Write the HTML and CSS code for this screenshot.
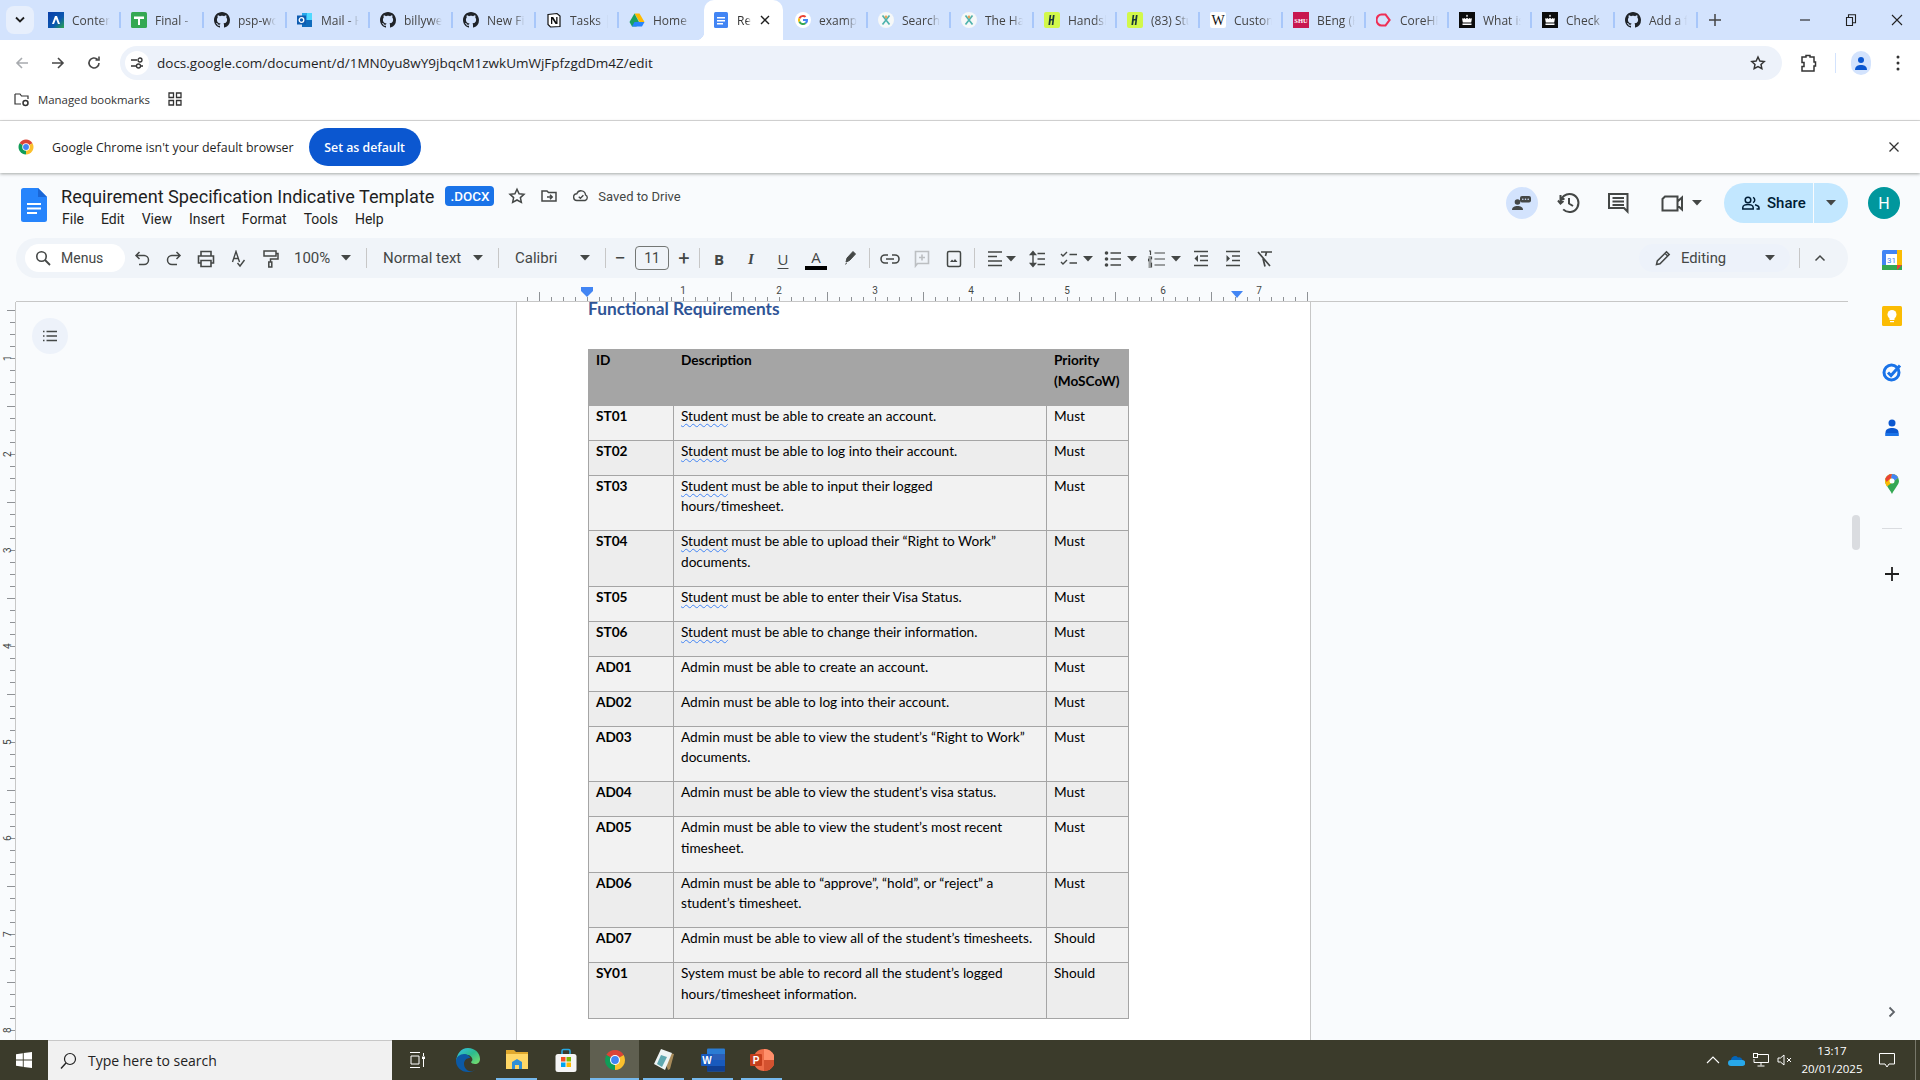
FILE: index.html
```html
<!DOCTYPE html>
<html lang="en">
<head>
    <meta charset="UTF-8">
    <title>Requirement Specification Indicative Template</title>
    <link rel="stylesheet" href="styles.css">
</head>
<body>
    <!-- shared icons -->
    <svg class="defs" width="0" height="0">
        <symbol id="github" viewBox="0 0 16 16"><path fill="#1f2328" d="M8 0C3.58 0 0 3.58 0 8c0 3.54 2.29 6.53 5.47 7.59.4.07.55-.17.55-.38 0-.19-.01-.82-.01-1.49-2.01.37-2.53-.49-2.69-.94-.09-.23-.48-.94-.82-1.13-.28-.15-.68-.52-.01-.53.63-.01 1.08.58 1.23.82.72 1.21 1.87.87 2.33.66.07-.52.28-.87.51-1.07-1.78-.2-3.64-.89-3.64-3.95 0-.87.31-1.59.82-2.15-.08-.2-.36-1.02.08-2.12 0 0 .67-.21 2.2.82.64-.18 1.32-.27 2-.27.68 0 1.36.09 2 .27 1.53-1.04 2.2-.82 2.2-.82.44 1.1.16 1.92.08 2.12.51.56.82 1.27.82 2.15 0 3.07-1.87 3.75-3.65 3.95.29.25.54.73.54 1.48 0 1.07-.01 1.93-.01 2.2 0 .21.15.46.55.38A8.013 8.013 0 0016 8c0-4.42-3.58-8-8-8z"/></symbol>
        <symbol id="handshake" viewBox="0 0 16 16"><rect width="16" height="16" rx="2" fill="#d2f84a"/><path fill="#17363a" d="M5.6 3h1.7l-.6 4h1.6l.6-4h1.7L9.400 13H7.700l.7-4.600H6.800L6.100 13H4.400z"/></symbol>
        <symbol id="crown" viewBox="0 0 16 16"><rect width="16" height="16" fill="#0b0c0c"/><path fill="#fff" d="M8 2.500l1 1.500-1 1-1-1zM3 6l1 .8L5.500 6l.8 1L8 5.800 9.700 7l.8-1 1.500.8L13 6l-.8 4.500H3.800zM3.500 11.500h9v1.500h-9z"/></symbol>
        <symbol id="chrome" viewBox="0 0 24 24"><path fill="#db4437" d="M12 12L3.340 7A10 10 0 0 1 20.660 7z"/><path fill="#fbc02d" d="M12 12l8.660-5A10 10 0 0 1 12 22z"/><path fill="#0f9d58" d="M12 12v10A10 10 0 0 1 3.340 7z"/><circle cx="12" cy="12" r="5" fill="#fff"/><circle cx="12" cy="12" r="3.900" fill="#4285f4"/></symbol>
        <symbol id="caret" viewBox="0 0 10 6"><path fill="#444746" d="M0 0h10L5 5.500z"/></symbol>
        <symbol id="docs" viewBox="0 0 26 34"><path fill="#2684fc" d="M2.500 0H17l9 9v22.500a2.500 2.500 0 0 1-2.500 2.500h-21A2.500 2.500 0 0 1 0 31.500v-29A2.500 2.500 0 0 1 2.500 0z"/><path fill="#1a66d6" d="M17 0l9 9h-9z"/><path fill="#fff" d="M6 15h14v2H6zM6 19.500h14v2H6zM6 24h10v2H6z"/></symbol>
        <symbol id="teal" viewBox="0 0 16 16"><circle cx="8" cy="8" r="8" fill="#f6f8f8"/><path d="M4.500 3.500l7 9M11.500 3.500l-7 9" stroke="#4fb3ad" stroke-width="1.700"/><circle cx="8" cy="5" r="1.400" fill="#e6a65c"/></symbol>
    </svg>

    <div class="tabstrip">
        <div class="tab-search"><svg width="12" height="8" viewBox="0 0 12 8"><path d="M2 1.500l4 4 4-4" fill="none" stroke="#1f1f1f" stroke-width="1.800"/></svg></div>
        <div class="tab"><svg class="fav" viewBox="0 0 16 16"><defs><linearGradient id="ctn" x1="0" y1="0" x2="1" y2="1"><stop offset="0" stop-color="#0a3ea8"/><stop offset=".6" stop-color="#0a58b0"/><stop offset="1" stop-color="#2da84a"/></linearGradient></defs><rect width="16" height="16" fill="url(#ctn)"/><path fill="#fff" d="M7 4h2l3 8h-2L8 7l-2 5H4z"/></svg><span class="tab-title">Content</span></div>
        <div class="tab"><svg class="fav" viewBox="0 0 16 16"><rect width="16" height="16" rx="1.500" fill="#34a853"/><path fill="#fff" d="M3 4.500h10V7H9v6H7V7H3z"/></svg><span class="tab-title">Final - </span></div>
        <div class="tab"><svg class="fav"><use href="#github"/></svg><span class="tab-title">psp-work</span></div>
        <div class="tab"><svg class="fav" viewBox="0 0 16 16"><path fill="#28a8ea" d="M5 1h10v7H5z"/><path fill="#0f6cbd" d="M5 8h10v7H5z"/><path fill="#50d9ff" d="M10 1h5v7h-5z"/><rect y="3.500" width="9" height="9" fill="#0f5cb0"/><circle cx="4.500" cy="8" r="2.300" fill="none" stroke="#fff" stroke-width="1.300"/></svg><span class="tab-title">Mail - H</span></div>
        <div class="tab"><svg class="fav"><use href="#github"/></svg><span class="tab-title">billywe</span></div>
        <div class="tab"><svg class="fav"><use href="#github"/></svg><span class="tab-title">New Fi</span></div>
        <div class="tab"><svg class="fav" viewBox="0 0 16 16"><path fill="#fff" stroke="#111" stroke-width="1.200" d="M2 2.500L11 1.500l3 2.500v10.500l-9.500.500L2 12.500z"/><path fill="#111" d="M5 5h2.200l3 5V5H11.500v7H9.500L6.300 7v5H5z"/></svg><span class="tab-title">Tasks |</span></div>
        <div class="tab tab-before-active"><svg class="fav" viewBox="0 0 16 16"><path fill="#ffba00" d="M5.500 1.500h5L15.500 10H10.500z"/><path fill="#0f9d58" d="M5.500 1.500L10 10l-2.500 4.500H3L.5 10z" opacity=".95"/><path fill="#2684fc" d="M3 14.500L5.500 10h10L13 14.500z"/></svg><span class="tab-title">Home</span></div>
        <div class="tab tab-active"><svg class="fav" viewBox="0 0 16 16"><rect width="14" height="16" x="1" rx="1.500" fill="#4285f4"/><path fill="#fff" d="M4 5h8v1.500H4zM4 8h8v1.500H4zM4 11h6v1.500H4z"/></svg><span class="tab-title tab-title-short">Requirement</span><svg class="tab-close" width="10" height="10" viewBox="0 0 10 10"><path d="M1 1l8 8M9 1l-8 8" stroke="#1f1f1f" stroke-width="1.400"/></svg></div>
        <div class="tab"><svg class="fav" viewBox="0 0 16 16"><circle cx="8" cy="8" r="8" fill="#fff"/><path fill="#ea4335" d="M8 3a5 5 0 0 1 3.300 1.200l-1.400 1.400A3 3 0 0 0 5.200 7L3.500 5.700A5 5 0 0 1 8 3z"/><path fill="#fbbc05" d="M3.500 5.700L5.200 7a3 3 0 0 0 0 2L3.500 10.300a5 5 0 0 1 0-4.600z"/><path fill="#34a853" d="M5.200 9a3 3 0 0 0 4.600 1.500l1.500 1.300A5 5 0 0 1 3.500 10.300z"/><path fill="#4285f4" d="M13 7H8v2h2.800a2.400 2.400 0 0 1-1 1.500l1.500 1.300A5 5 0 0 0 13 7z"/></svg><span class="tab-title">example</span></div>
        <div class="tab"><svg class="fav"><use href="#teal"/></svg><span class="tab-title">Search</span></div>
        <div class="tab"><svg class="fav"><use href="#teal"/></svg><span class="tab-title">The Ha</span></div>
        <div class="tab"><svg class="fav"><use href="#handshake"/></svg><span class="tab-title">Handshake</span></div>
        <div class="tab"><svg class="fav"><use href="#handshake"/></svg><span class="tab-title">(83) Stu</span></div>
        <div class="tab"><svg class="fav" viewBox="0 0 16 16"><rect width="16" height="16" rx="2" fill="#fff"/><text x="8" y="12.500" class="fav-wiki">W</text></svg><span class="tab-title">Custom</span></div>
        <div class="tab"><svg class="fav" viewBox="0 0 16 16"><rect width="16" height="16" fill="#c8174f"/><text x="8" y="10.500" class="fav-shu">SHU</text></svg><span class="tab-title">BEng (H</span></div>
        <div class="tab"><svg class="fav" viewBox="0 0 16 16"><path d="M5 2.500h4.500L14 8l-4.500 5.500H5A5.500 5.500 0 0 1 5 2.500z" transform="translate(1 0) scale(.9 1)" fill="none" stroke="#ef2f55" stroke-width="2.200"/></svg><span class="tab-title">CoreHR</span></div>
        <div class="tab"><svg class="fav"><use href="#crown"/></svg><span class="tab-title">What is</span></div>
        <div class="tab"><svg class="fav"><use href="#crown"/></svg><span class="tab-title">Check</span></div>
        <div class="tab"><svg class="fav"><use href="#github"/></svg><span class="tab-title">Add a f</span></div>
        <div class="tab-new"><svg width="12" height="12" viewBox="0 0 12 12"><path d="M6 0v12M0 6h12" stroke="#444" stroke-width="1.500"/></svg></div>
        <div class="window-btns">
            <svg width="12" height="12" viewBox="0 0 12 12"><path d="M1 6h10" stroke="#222" stroke-width="1.100"/></svg>
            <svg width="12" height="12" viewBox="0 0 12 12"><path d="M1.500 3.500h6v8h-6zM3.500 3.500V.8h7v8H7.500" fill="none" stroke="#222" stroke-width="1.100"/></svg>
            <svg width="12" height="12" viewBox="0 0 12 12"><path d="M1 1l10 10M11 1L1 11" stroke="#222" stroke-width="1.100"/></svg>
        </div>
    </div>

    <div class="browserbar">
        <svg class="nav-btn nav-off" viewBox="0 0 16 16"><path d="M14 8H3M8 3L3 8l5 5" fill="none" stroke="#a8abaf" stroke-width="1.600"/></svg>
        <svg class="nav-btn" viewBox="0 0 16 16"><path d="M2 8h11M8 3l5 5-5 5" fill="none" stroke="#474747" stroke-width="1.600"/></svg>
        <svg class="nav-btn" viewBox="0 0 16 16"><path d="M13 8a5 5 0 1 1-1.500-3.600M13 1.500v3.500H9.500" fill="none" stroke="#474747" stroke-width="1.600"/></svg>
        <div class="omnibox">
            <div class="site-info"><svg width="14" height="14" viewBox="0 0 14 14"><path d="M1 4h6M11 10h2M1 10h5" stroke="#333" stroke-width="1.300"/><circle cx="10" cy="4" r="2" fill="none" stroke="#333" stroke-width="1.300"/><circle cx="8.500" cy="10" r="2" fill="none" stroke="#333" stroke-width="1.300"/></svg></div>
            <span class="url">docs.google.com/document/d/1MN0yu8wY9jbqcM1zwkUmWjFpfzgdDm4Z/edit</span>
            <svg class="omni-star" width="16" height="16" viewBox="0 0 24 24"><path d="M12 3l2.800 6 6.500.7-4.800 4.400 1.300 6.400L12 17.300l-5.800 3.200 1.300-6.400L2.700 9.700 9.200 9z" fill="none" stroke="#333" stroke-width="2.200"/></svg>
        </div>
        <svg class="ext-icon" width="18" height="18" viewBox="0 0 18 18"><path d="M3 3h4V1.500h4V3h4v5h1.500v4H15v5H3v-4.500h2v-4H3z" fill="none" stroke="#333" stroke-width="1.500"/></svg>
        <div class="bar-sep"></div>
        <div class="profile"><svg width="14" height="14" viewBox="0 0 14 14"><circle cx="7" cy="4" r="3" fill="#0b57d0"/><path d="M1 14c0-4 3-5 6-5s6 1 6 5z" fill="#0b57d0"/></svg></div>
        <svg class="dots" width="4" height="16" viewBox="0 0 4 16"><circle cx="2" cy="2" r="1.500" fill="#333"/><circle cx="2" cy="8" r="1.500" fill="#333"/><circle cx="2" cy="14" r="1.500" fill="#333"/></svg>
    </div>

    <div class="bookmarks">
        <svg width="16" height="16" viewBox="0 0 16 16"><path d="M1 3h5l1.500 2H14v3M7 13H1V3" fill="none" stroke="#333" stroke-width="1.200"/><circle cx="11.500" cy="12" r="2.500" fill="none" stroke="#333" stroke-width="1.500"/></svg>
        <span>Managed bookmarks</span>
        <svg class="bm-grid" width="14" height="14" viewBox="0 0 14 14"><path d="M1 1h4.500v4.500H1zM8.500 1H13v4.500H8.500zM1 8.500h4.500V13H1zM8.500 8.500H13V13H8.500z" fill="none" stroke="#333" stroke-width="1.300"/></svg>
    </div>

    <div class="infobar">
        <svg class="info-logo"><use href="#chrome"/></svg>
        <span class="info-text">Google Chrome isn't your default browser</span>
        <button class="default-btn">Set as default</button>
        <svg class="info-close" width="10" height="10" viewBox="0 0 10 10"><path d="M.5.500l9 9M9.500.500l-9 9" stroke="#333" stroke-width="1.300"/></svg>
    </div>

    <div class="docs">
        <header class="docs-header">
            <svg class="docs-logo"><use href="#docs"/></svg>
            <div class="docs-titles">
                <div class="title-row">
                    <span class="doc-title">Requirement Specification Indicative Template</span>
                    <span class="doc-badge">.DOCX</span>
                    <svg class="title-icon" width="18" height="18" viewBox="0 0 24 24"><path d="M12 3l2.800 6 6.500.7-4.800 4.400 1.300 6.400L12 17.300l-5.800 3.200 1.300-6.400L2.700 9.700 9.200 9z" fill="none" stroke="#444746" stroke-width="2"/></svg>
                    <svg class="title-icon" width="18" height="18" viewBox="0 0 18 18"><path d="M2 4h5l1.500 1.500H16V14H2zM7 10h5M10 7.800L12.200 10 10 12.200" fill="none" stroke="#444746" stroke-width="1.500"/></svg>
                    <svg class="title-icon" width="18" height="18" viewBox="0 0 24 24"><path d="M7 18a4.500 4.500 0 0 1-.6-9A6 6 0 0 1 18 10.500 4 4 0 0 1 17.500 18zM9 13l2.200 2 4-4" fill="none" stroke="#444746" stroke-width="1.800"/></svg>
                    <span class="saved">Saved to Drive</span>
                </div>
                <nav class="menu-row">
                    <span>File</span><span>Edit</span><span>View</span><span>Insert</span><span>Format</span><span>Tools</span><span>Help</span>
                </nav>
            </div>
            <div class="header-right">
                <div class="chat-btn"><svg width="20" height="16" viewBox="0 0 20 16"><circle cx="5.500" cy="7" r="2.800" fill="#444746"/><path d="M0 15c0-3 2.500-4 5.500-4s5.500 1 5.500 4z" fill="#444746"/><rect x="8" y="1" width="11" height="6.500" rx="2" fill="#444746"/><circle cx="10.800" cy="4.200" r=".8" fill="#d3e3fd"/><circle cx="13.500" cy="4.200" r=".8" fill="#d3e3fd"/><circle cx="16.200" cy="4.200" r=".8" fill="#d3e3fd"/></svg></div>
                <svg class="head-icon head-history" viewBox="0 0 24 24"><path d="M3.500 12a9 9 0 1 1 2.700 6.400M12 7v5.500l4 2.500M1 9.500l2.500 3 3-2.500M3.500 4v4h4" fill="none" stroke="#444746" stroke-width="2"/></svg>
                <svg class="head-icon head-comment" viewBox="0 0 24 24"><path d="M3 3h18.500v17.500L18 17H3zM6.500 7H18M6.500 10.500H18M6.500 14H18" fill="none" stroke="#444746" stroke-width="2"/></svg>
                <svg class="head-icon head-meet" viewBox="0 0 24 24"><path d="M5 5.500h12.500v14H2.500V8zM17.500 10.500L22 6.500v12l-4.500-4" fill="none" stroke="#444746" stroke-width="2"/></svg>
                <svg class="caret head-caret"><use href="#caret"/></svg>
                <div class="share">
                    <div class="share-main"><svg width="18" height="14" viewBox="0 0 18 14"><circle cx="6" cy="4" r="2.800" fill="none" stroke="#001d35" stroke-width="1.500"/><path d="M.8 13v-1.500c0-2 3-3 5.200-3s5.200 1 5.200 3V13zM11 1.400a2.800 2.800 0 0 1 0 5.200M13 8.800c2 .5 4 1.300 4 3V13h-2.500" fill="none" stroke="#001d35" stroke-width="1.500"/></svg><span>Share</span></div>
                    <div class="share-more"><svg class="caret"><use href="#caret"/></svg></div>
                </div>
                <div class="avatar">H</div>
            </div>
        </header>

        <div class="docs-left">
            <div class="docs-toolbar">
                <div class="menus-pill"><svg width="16" height="16" viewBox="0 0 16 16"><circle cx="6.500" cy="6.500" r="4.700" fill="none" stroke="#444746" stroke-width="1.600"/><path d="M10 10l5 5" stroke="#444746" stroke-width="1.800"/></svg><span>Menus</span></div>
                <svg class="tb-icon" viewBox="0 0 32 18"><path d="M13.500 2L10 5.500 13.500 9M10 5.500h8a4.500 4.500 0 0 1 0 9h-5" fill="none" stroke="#444746" stroke-width="1.500"/></svg>
                <svg class="tb-icon" viewBox="0 0 32 18"><path d="M18.500 2L22 5.500 18.500 9M22 5.500h-8a4.500 4.500 0 0 0 0 9h5" fill="none" stroke="#444746" stroke-width="1.500"/></svg>
                <svg class="tb-icon" viewBox="0 0 32 18"><path d="M11 6V1.500h10V6M11 13H8.500V6h15v7H21M11 10.500h10v6H11z" fill="none" stroke="#444746" stroke-width="1.600"/></svg>
                <svg class="tb-icon" viewBox="0 0 32 18"><path d="M10.500 12L14 1.500l3.500 10.500M11.800 8.500h4.500M15.500 13l2.500 3 4.500-6" fill="none" stroke="#444746" stroke-width="1.400"/></svg>
                <svg class="tb-icon" viewBox="0 0 32 18"><path d="M10 1h12v5H10zM22 3.500h2V9h-7.500v3M14.800 12h3v5h-3z" fill="none" stroke="#444746" stroke-width="1.500"/></svg>
                <div class="tb-select tb-zoom"><span>100%</span><svg class="caret"><use href="#caret"/></svg></div>
                <div class="tb-sep"></div>
                <div class="tb-select tb-style"><span>Normal text</span><svg class="caret"><use href="#caret"/></svg></div>
                <div class="tb-sep"></div>
                <div class="tb-select tb-font"><span>Calibri</span><svg class="caret"><use href="#caret"/></svg></div>
                <div class="tb-sep tb-sep-size"></div>
                <div class="tb-size-btn">&minus;</div>
                <div class="tb-size">11</div>
                <div class="tb-size-btn">+</div>
                <div class="tb-sep tb-sep-tight"></div>
                <div class="tb-letter tb-bold">B</div>
                <div class="tb-letter tb-italic">I</div>
                <div class="tb-letter tb-under">U</div>
                <div class="tb-letter tb-color"><span>A</span><i></i></div>
                <svg class="tb-icon" viewBox="0 0 32 18"><path d="M13 12l1-4 6-6.500 2.500 2.500-6 6.500z" fill="#444746" stroke="#444746"/><path d="M12 15l2-1.500-1-1z" fill="#444746"/></svg>
                <div class="tb-sep tb-sep-narrow"></div>
                <svg class="tb-icon" viewBox="0 0 32 18"><path d="M14 5h-3a4 4 0 0 0 0 8h3M18 5h3a4 4 0 0 1 0 8h-3M12 9h8" fill="none" stroke="#444746" stroke-width="1.600"/></svg>
                <svg class="tb-icon" viewBox="0 0 32 18"><path d="M9.500 1.500h13v12h-11l-2 2.500zM16 4.500v6M13 7.500h6" fill="none" stroke="#bcbfc2" stroke-width="1.600"/></svg>
                <svg class="tb-icon" viewBox="0 0 32 18"><rect x="9.500" y="1.500" width="13" height="15" rx="1.500" fill="none" stroke="#444746" stroke-width="1.500"/><path d="M12 12l2-2.500 1.500 1.500 1.500-2 2.500 3z" fill="#444746"/></svg>
                <div class="tb-sep tb-sep-narrow"></div>
                <div class="tb-drop tb-align"><svg width="16" height="18" viewBox="0 0 16 18"><path d="M1 2h14M1 6.500h9M1 11h14M1 15.500h14" stroke="#444746" stroke-width="1.400"/></svg><svg class="caret"><use href="#caret"/></svg></div>
                <svg class="tb-icon" viewBox="0 0 32 18"><path d="M12 1.500v15M9.500 4.500L12 1.500l2.500 3zM9.500 13.500l2.500 3 2.500-3zM16.500 3.500H24M16.500 9H24M16.500 14.500H24" fill="#444746" stroke="#444746" stroke-width="1.400"/></svg>
                <div class="tb-drop tb-check"><svg width="18" height="18" viewBox="0 0 18 18"><path d="M1 4l2 2 4-4M1 12l2 2 4-4" fill="none" stroke="#444746" stroke-width="1.400"/><path d="M9.500 4.500H17M9.500 13H17" stroke="#444746" stroke-width="1.500"/></svg><svg class="caret"><use href="#caret"/></svg></div>
                <div class="tb-drop"><svg width="18" height="18" viewBox="0 0 18 18"><circle cx="2.500" cy="3" r="1.800" fill="#444746"/><circle cx="2.500" cy="9" r="1.800" fill="#444746"/><circle cx="2.500" cy="15" r="1.800" fill="#444746"/><path d="M6.500 3H17M6.500 9H17M6.500 15H17" stroke="#444746" stroke-width="1.500"/></svg><svg class="caret"><use href="#caret"/></svg></div>
                <div class="tb-drop tb-num"><svg width="18" height="18" viewBox="0 0 18 18"><path d="M6.500 3H17M6.500 9H17M6.500 15H17M1 1h1.500v4M.5 7h3v2h-3v2h3M.5 13h3v4h-3M.5 15h3" fill="none" stroke="#444746" stroke-width="1.200"/></svg><svg class="caret"><use href="#caret"/></svg></div>
                <svg class="tb-icon" viewBox="0 0 32 18"><path d="M9 1.500h14M15 6h8M15 10.500h8M9 15.500h14" stroke="#444746" stroke-width="1.500"/><path d="M13 5v7l-3.500-3.500z" fill="#444746"/></svg>
                <svg class="tb-icon" viewBox="0 0 32 18"><path d="M9 1.500h14M15 6h8M15 10.500h8M9 15.500h14" stroke="#444746" stroke-width="1.500"/><path d="M9.500 5v7l3.500-3.500z" fill="#444746"/></svg>
                <svg class="tb-icon" viewBox="0 0 32 18"><path d="M12 2h11M17.500 2l-1 4M14 8.500l2 8M9 2l12 14" fill="none" stroke="#444746" stroke-width="1.700"/></svg>
                <div class="tb-right">
                    <div class="editing"><svg width="16" height="16" viewBox="0 0 16 16"><path d="M1.500 14.500l.8-3.500L11.500 1.800l2.700 2.700L5 13.700zM10 3.300L12.700 6" fill="none" stroke="#444746" stroke-width="1.500"/></svg><span>Editing</span><svg class="caret"><use href="#caret"/></svg></div>
                    <div class="tb-sep tb-sep-edit"></div>
                    <svg class="collapse" width="12" height="8" viewBox="0 0 12 8"><path d="M1.500 6.500L6 2l4.500 4.500" fill="none" stroke="#444746" stroke-width="1.500"/></svg>
                </div>
            </div>

            <div class="ruler-row">
                <div class="ruler">
                    <div class="ruler-nums"><span>1</span><span>2</span><span>3</span><span>4</span><span>5</span><span>6</span><span>7</span></div>
                    <div class="indent-left"></div>
                    <div class="indent-right"></div>
                </div>
            </div>

            <div class="workspace">
                <div class="gutter">
                    <div class="vruler"><span>1</span><span>2</span><span>3</span><span>4</span><span>5</span><span>6</span><span>7</span><span>8</span></div>
                    <div class="outline-btn"><svg width="16" height="12" viewBox="0 0 16 12"><path d="M4.500 1.500H15M4.500 6H15M4.500 10.500H15M1 1.500h1.500M1 6h1.500M1 10.500h1.500" stroke="#444746" stroke-width="1.500"/></svg></div>
                </div>
                <main class="page">
                    <h2 class="doc-heading">Functional Requirements</h2>
                    <table class="req-table">
                        <thead>
                            <tr><th class="col-id">ID</th><th class="col-desc">Description</th><th class="col-pri">Priority (MoSCoW)</th></tr>
                        </thead>
                        <tbody>
                            <tr><th>ST01</th><td><u>Student</u> must be able to create an account.</td><td>Must</td></tr>
                            <tr><th>ST02</th><td><u>Student</u> must be able to log into their account.</td><td>Must</td></tr>
                            <tr><th>ST03</th><td><u>Student</u> must be able to input their logged<br>hours/timesheet.</td><td>Must</td></tr>
                            <tr><th>ST04</th><td><u>Student</u> must be able to upload their &ldquo;Right to Work&rdquo; documents.</td><td>Must</td></tr>
                            <tr><th>ST05</th><td><u>Student</u> must be able to enter their Visa Status.</td><td>Must</td></tr>
                            <tr><th>ST06</th><td><u>Student</u> must be able to change their information.</td><td>Must</td></tr>
                            <tr><th>AD01</th><td>Admin must be able to create an account.</td><td>Must</td></tr>
                            <tr><th>AD02</th><td>Admin must be able to log into their account.</td><td>Must</td></tr>
                            <tr><th>AD03</th><td>Admin must be able to view the student&rsquo;s &ldquo;Right to Work&rdquo; documents.</td><td>Must</td></tr>
                            <tr><th>AD04</th><td>Admin must be able to view the student&rsquo;s visa status.</td><td>Must</td></tr>
                            <tr><th>AD05</th><td>Admin must be able to view the student&rsquo;s most recent timesheet.</td><td>Must</td></tr>
                            <tr><th>AD06</th><td>Admin must be able to &ldquo;approve&rdquo;, &ldquo;hold&rdquo;, or &ldquo;reject&rdquo; a student&rsquo;s timesheet.</td><td>Must</td></tr>
                            <tr><th>AD07</th><td>Admin must be able to view all of the student&rsquo;s timesheets.</td><td>Should</td></tr>
                            <tr><th>SY01</th><td>System must be able to record all the student&rsquo;s logged hours/timesheet information.</td><td>Should</td></tr>
                        </tbody>
                    </table>
                </main>
                <div class="scroll-thumb"></div>
            </div>
        </div>

        <aside class="rail">
            <div class="rail-item"><svg width="20" height="20" viewBox="0 0 20 20"><rect width="20" height="20" rx="1.500" fill="#4285f4"/><rect x="0" y="15" width="20" height="5" fill="#34a853"/><rect x="15" y="0" width="5" height="15" fill="#fbbc04"/><path d="M15 15h5l-5 5z" fill="#ea4335"/><rect x="4" y="4" width="11" height="11" fill="#fff"/><text x="9.500" y="13" class="rail-cal">31</text></svg></div>
            <div class="rail-item"><svg width="20" height="20" viewBox="0 0 20 20"><rect width="20" height="20" rx="1.500" fill="#fbbc04"/><circle cx="10" cy="8.500" r="4.500" fill="#fff"/><rect x="7.500" y="12" width="5" height="2" fill="#fff"/><rect x="8" y="15" width="4" height="1.200" fill="#fff"/></svg></div>
            <div class="rail-item"><svg width="20" height="20" viewBox="0 0 20 20"><circle cx="9.500" cy="10.500" r="7.500" fill="none" stroke="#1a73e8" stroke-width="3"/><path d="M6 10.500l3 3L18 3.500" fill="none" stroke="#1a73e8" stroke-width="3"/></svg></div>
            <div class="rail-item"><svg width="16" height="18" viewBox="0 0 16 18"><circle cx="8" cy="4" r="3.500" fill="#0b57d0"/><path d="M1.500 17v-3.500C1.500 10 5 9 8 9s6.500 1 6.500 4.500V17z" fill="#0b57d0"/><path d="M1.500 14h13v3h-13z" fill="#1a73e8"/></svg></div>
            <div class="rail-item"><svg width="16" height="20" viewBox="0 0 16 20"><path d="M8 0a7 7 0 0 1 7 7c0 3.500-4 7-7 13C5 14 1 10.500 1 7a7 7 0 0 1 7-7z" fill="#34a853"/><path d="M8 0a7 7 0 0 1 6.200 3.700L3 12.500C1.800 10.800 1 9 1 7a7 7 0 0 1 7-7z" fill="#fbbc04"/><path d="M3 2.200A7 7 0 0 1 8 0l-1 4-4.500 4L1.300 5A7 7 0 0 1 3 2.200z" fill="#ea4335"/><path d="M8 0a7 7 0 0 1 6.200 3.700l-4 3.300L7 4z" fill="#4285f4"/><circle cx="8" cy="7" r="2.500" fill="#fff"/></svg></div>
            <div class="rail-sep"></div>
            <svg class="rail-plus" width="14" height="14" viewBox="0 0 14 14"><path d="M7 0v14M0 7h14" stroke="#1f1f1f" stroke-width="1.800"/></svg>
            <svg class="rail-chevron" width="8" height="12" viewBox="0 0 8 12"><path d="M1.500 1.500L6 6l-4.500 4.500" fill="none" stroke="#5f6368" stroke-width="1.800"/></svg>
        </aside>
    </div>

    <footer class="taskbar">
        <div class="start"><svg width="16" height="16" viewBox="0 0 16 16"><path fill="#fff" d="M0 2.300l6.800-1v6.300H0zM7.700 1.100L16 0v7.600H7.700zM0 8.400h6.800v6.300l-6.800-1zM7.700 8.400H16V16l-8.300-1.100z"/></svg></div>
        <div class="task-search"><svg width="18" height="18" viewBox="0 0 18 18"><circle cx="11" cy="7" r="5.500" fill="none" stroke="#222" stroke-width="1.200"/><path d="M7 11l-5 5.500" stroke="#222" stroke-width="1.400"/></svg><span>Type here to search</span></div>
        <div class="task-app task-view"><svg width="16" height="16" viewBox="0 0 16 16"><path d="M0 .5h10M0 15.500h10M1 4h8v8H1zM13.500 1v3M13.500 7v8" fill="none" stroke="#fff" stroke-width="1"/><rect x="12" y="4.500" width="3" height="2.500" fill="#fff"/></svg></div>
        <div class="task-app"><svg width="24" height="24" viewBox="0 0 24 24"><defs><linearGradient id="edge" x1="0" y1="0" x2="1" y2="1"><stop offset="0" stop-color="#35c1f1"/><stop offset=".5" stop-color="#2cbb8e"/><stop offset="1" stop-color="#7ee06a"/></linearGradient></defs><path fill="url(#edge)" d="M12 0c7 0 12 5 12 11 0 3-2 5-5 5-2 0-4-1-4-2 1-1 2-2 1-4-1-3-5-4-8-3-4 1-7 4-8 7C.5 6 5 0 12 0z"/><path fill="#0c59a4" d="M0 13c0-4 4-7 8-7 3 0 6 2 6 4-3 0-6 2-6 6 0 3 2 6 5 7 2 .5 4 .2 6-1-2 1.500-4 2-7 2C5 24 0 19 0 13z"/></svg></div>
        <div class="task-app task-open"><svg width="24" height="22" viewBox="0 0 24 22"><path fill="#e0a92e" d="M1 1h8l2 2h12v5H1z"/><rect x="1" y="5" width="22" height="15" fill="#ffd766"/><path fill="#2f8fd6" d="M7 13l5-3 5 3v7h-3v-4h-4v4H7z"/></svg></div>
        <div class="task-app"><svg width="24" height="24" viewBox="0 0 24 24"><path d="M8 6V3a1.500 1.500 0 0 1 1.500-1.500h5A1.500 1.500 0 0 1 16 3v3" fill="none" stroke="#27a9e3" stroke-width="1.600"/><rect x="1.500" y="6" width="21" height="18" rx="2.500" fill="#f5f5f5"/><rect x="7" y="9" width="4.500" height="4.500" fill="#f25022"/><rect x="12.500" y="9" width="4.500" height="4.500" fill="#7fba00"/><rect x="7" y="14.500" width="4.500" height="4.500" fill="#00a4ef"/><rect x="12.500" y="14.500" width="4.500" height="4.500" fill="#ffb900"/></svg></div>
        <div class="task-app task-active"><svg width="24" height="24"><use href="#chrome"/></svg></div>
        <div class="task-app task-open"><svg width="24" height="24" viewBox="0 0 24 24"><path fill="#a88b5a" d="M9 3l13 3-4 15-2 1z"/><path fill="#eef4f4" d="M9 1l11 4-7 17-11-6z"/><path fill="#5fa8b0" d="M9 7l6 2-5 10-5-3z"/></svg></div>
        <div class="task-app task-open"><svg width="24" height="24" viewBox="0 0 24 24"><rect x="6" y="0.500" width="18" height="23" rx="1" fill="#2b7cd3"/><rect x="6" y="6" width="18" height="6" fill="#2b5fb8"/><rect x="6" y="12" width="18" height="6" fill="#185abd"/><rect x="6" y="18" width="18" height="5.500" fill="#103f91"/><rect x="0" y="6" width="12" height="12" rx="1" fill="#185abd"/><text x="6" y="15.500" class="task-letter">W</text></svg></div>
        <div class="task-app task-open"><svg width="24" height="24" viewBox="0 0 24 24"><circle cx="14" cy="12" r="11" fill="#ed6c47"/><path d="M14 1a11 11 0 0 1 11 11H14z" fill="#ff8f6b"/><path d="M14 12h11a11 11 0 0 1-11 11z" fill="#d35230"/><rect x="0" y="6" width="12" height="12" rx="1" fill="#c43e1c"/><text x="6" y="15.500" class="task-letter">P</text></svg></div>
        <div class="tray">
            <svg class="tray-icon" width="14" height="8" viewBox="0 0 14 8"><path d="M1 7l6-6 6 6" fill="none" stroke="#fff" stroke-width="1.100"/></svg>
            <svg class="tray-icon" width="17" height="11" viewBox="0 0 17 11"><path fill="#0364b8" d="M3 4.500A4 4 0 0 1 10 2.500 3.500 3.500 0 0 1 14.500 6H3z"/><path fill="#28a8ea" d="M3 11a3 3 0 0 1 0-6h11a3 3 0 0 1 .5 6z"/></svg>
            <svg class="tray-icon" width="16" height="14" viewBox="0 0 16 14"><path d="M5 1.500h10.500V9.500H1V6M8 9.500v3M4.500 13h7" fill="none" stroke="#fff" stroke-width="1"/><rect x=".5" y=".5" width="4" height="4" fill="none" stroke="#fff" stroke-width="1"/></svg>
            <svg class="tray-icon" width="16" height="12" viewBox="0 0 16 12"><path d="M1 4h2.500L7 1v10L3.500 8H1zM10 4l4 4M14 4l-4 4" fill="none" stroke="#fff" stroke-width="1"/></svg>
            <div class="clock"><span>13:17</span><span>20/01/2025</span></div>
            <div class="notif"><svg width="16" height="15" viewBox="0 0 16 15"><path d="M.5.500h15V11H10l-2 3-2-3H.5z" fill="none" stroke="#fff" stroke-width="1"/></svg></div>
            <div class="show-desktop"></div>
        </div>
    </footer>
</body>
</html>
```

FILE: styles.css
```css
* {
    box-sizing: border-box;
}

html, body {
    margin: 0;
    padding: 0;
    height: 1080px;
    overflow: hidden;
}

body {
    display: flex;
    flex-direction: column;
    width: 1920px;
    font-family: "Open Sans", "Liberation Sans", sans-serif;
    color: #1f1f1f;
    background-color: #fff;
}

svg {
    display: block;
    flex: none;
}

.defs {
    position: absolute;
}

/* browser tabs */
.tabstrip {
    display: flex;
    align-items: center;
    height: 40px;
    background-color: #d3e3fd;
}

.tab-search {
    display: flex;
    align-items: center;
    justify-content: center;
    width: 28px;
    height: 28px;
    margin: 0 4px 0 6px;
    border-radius: 8px;
    background-color: #e7effc;
}

.tab {
    position: relative;
    display: flex;
    align-items: center;
    width: 83px;
    height: 40px;
    padding-left: 10px;
}

.tab::after {
    content: "";
    position: absolute;
    right: 0;
    top: 12px;
    width: 2px;
    height: 16px;
    background-color: #a8c7fa;
}

.tab-before-active::after,
.tab-active::after {
    display: none;
}

.tab-active {
    width: 79px;
    margin: 0 2px;
    padding-left: 9px;
    height: 40px;
    background-color: #fff;
    border-radius: 10px 10px 0 0;
}

.tab-active::before {
    content: "";
    position: absolute;
    left: -8px;
    bottom: 0;
    width: 8px;
    height: 8px;
    background: radial-gradient(circle at 0 0, transparent 8px, #fff 8.5px);
}

.fav {
    width: 16px;
    height: 16px;
    margin-right: 8px;
}

.fav-wiki {
    font-family: "Liberation Serif", serif;
    font-size: 14px;
    text-anchor: middle;
    fill: #111;
}

.fav-shu {
    font-family: "Liberation Serif", serif;
    font-weight: 700;
    font-size: 6.5px;
    text-anchor: middle;
    fill: #fff;
}

.tab-title {
    width: 38px;
    overflow: hidden;
    white-space: nowrap;
    font-size: 12px;
    color: #444;
    -webkit-mask-image: linear-gradient(to right, #000 70%, transparent);
    mask-image: linear-gradient(to right, #000 70%, transparent);
}

.tab-title-short {
    width: 14px;
    color: #333;
}

.tab-close {
    margin-left: 9px;
}

.tab-new {
    width: 34px;
    display: flex;
    justify-content: center;
}

.window-btns {
    display: flex;
    align-items: center;
    gap: 34px;
    margin-left: auto;
    padding-right: 17px;
}

/* address bar */
.browserbar {
    display: flex;
    align-items: center;
    height: 40px;
    padding-top: 6px;
    background-color: #fff;
    border-radius: 10px 10px 0 0;
    margin-top: 0;
}

.nav-btn {
    width: 16px;
    height: 16px;
    margin-left: 14px;
    margin-right: 6px;
}

.nav-btn + .nav-btn {
    margin-left: 14px;
}

.omnibox {
    display: flex;
    align-items: center;
    width: 1662px;
    height: 34px;
    margin-left: 12px;
    padding-left: 5px;
    border-radius: 17px;
    background-color: #edf2fa;
}

.site-info {
    display: flex;
    align-items: center;
    justify-content: center;
    width: 24px;
    height: 24px;
    border-radius: 50%;
    background-color: #fff;
}

.url {
    margin-left: 8px;
    font-size: 13.5px;
    color: #1f1f1f;
    white-space: nowrap;
}

.omni-star {
    margin-left: auto;
    margin-right: 16px;
}

.ext-icon {
    margin-left: 17px;
}

.bar-sep {
    width: 1px;
    height: 20px;
    margin-left: 18px;
    background-color: #d3e3fd;
}

.profile {
    display: flex;
    align-items: center;
    justify-content: center;
    width: 20px;
    height: 24px;
    margin-left: 15px;
    border-radius: 10px;
    background-color: #d3e3fd;
}

.dots {
    margin-left: 25px;
}

/* bookmarks and infobar */
.bookmarks {
    display: flex;
    align-items: center;
    height: 41px;
    padding: 0 0 2px 14px;
    font-size: 11.4px;
    color: #333;
    border-bottom: 1px solid #dcdcdc;
}

.bookmarks span {
    margin-left: 8px;
}

.bm-grid {
    margin-left: 18px;
}

.infobar {
    display: flex;
    align-items: center;
    height: 52px;
    padding-left: 17px;
    background-color: #fff;
    box-shadow: 0 1px 3px rgba(60, 64, 60, 0.45);
    position: relative;
}

.info-logo {
    width: 18px;
    height: 18px;
}

.info-text {
    margin-left: 17px;
    font-size: 12.4px;
}

.default-btn {
    width: 112px;
    height: 38px;
    margin-left: 15px;
    border: none;
    border-radius: 19px;
    background-color: #0b57d0;
    color: #fff;
    font-family: "Open Sans", sans-serif;
    font-size: 12.3px;
    font-weight: 600;
}

.info-close {
    margin-left: auto;
    margin-right: 21px;
}

/* docs */
.docs {
    flex: 1;
    display: grid;
    grid-template-columns: 1864px 56px;
    grid-template-rows: 65px 1fr;
    min-height: 0;
    background-color: #f9fbfd;
    font-family: Roboto, "Liberation Sans", sans-serif;
}

.docs-header {
    grid-column: 1 / 3;
    display: flex;
    align-items: flex-start;
    padding: 14px 0 0 21px;
}

.docs-logo {
    width: 26px;
    height: 34px;
    margin-top: 1px;
}

.docs-titles {
    margin-left: 14px;
}

.title-row {
    display: flex;
    align-items: center;
    height: 20px;
    margin-top: -1px;
}

.doc-title {
    font-size: 18.15px;
    color: #1f1f1f;
    white-space: nowrap;
}

.doc-badge {
    display: flex;
    align-items: center;
    height: 20px;
    margin-left: 11px;
    padding: 0 5px;
    border-radius: 4px;
    background-color: #1a73e8;
    color: #fff;
    font-size: 13.4px;
    font-weight: 500;
}

.title-icon {
    margin-left: 14px;
}

.saved {
    margin-left: 8px;
    font-size: 13px;
    color: #444746;
}

.menu-row {
    display: flex;
    gap: 17px;
    margin-top: 3px;
    margin-left: 1px;
    font-size: 14px;
    line-height: 20px;
    color: #1f1f1f;
}

.header-right {
    display: flex;
    align-items: center;
    height: 40px;
    margin-left: auto;
    margin-top: -4px;
    padding-right: 20px;
}

.chat-btn {
    display: flex;
    align-items: center;
    justify-content: center;
    width: 32px;
    height: 32px;
    border-radius: 50%;
    background-color: #d3e3fd;
}

.head-icon {
    width: 24px;
    height: 24px;
}

.head-history {
    margin-left: 19px;
}

.head-comment {
    margin-left: 25px;
}

.head-meet {
    margin-left: 30px;
}

.caret {
    width: 10px;
    height: 6px;
}

.head-caret {
    margin-left: 8px;
}

.share {
    display: flex;
    height: 40px;
    margin-left: 22px;
    border-radius: 20px;
    background-color: #c2e7ff;
    color: #001d35;
    font-size: 15px;
    font-weight: 500;
}

.share-main {
    display: flex;
    align-items: center;
    gap: 7px;
    width: 90px;
    padding-left: 18px;
    border-right: 1px solid #f9fbfd;
}

.share-more {
    display: flex;
    align-items: center;
    justify-content: center;
    width: 34px;
}

.avatar {
    display: flex;
    align-items: center;
    justify-content: center;
    width: 32px;
    height: 32px;
    margin-left: 20px;
    border-radius: 50%;
    background-color: #00979d;
    color: #fff;
    font-size: 16px;
}

.docs-left {
    display: flex;
    flex-direction: column;
    min-height: 0;
}

.docs-toolbar {
    display: flex;
    align-items: center;
    height: 40px;
    margin: 0 16px;
    padding-left: 9px;
    border-radius: 20px;
    background-color: #f0f4f9;
    font-size: 14px;
    color: #444746;
}

.menus-pill {
    display: flex;
    align-items: center;
    gap: 10px;
    width: 100px;
    height: 28px;
    margin-right: 1px;
    padding-left: 10px;
    border-radius: 14px;
    background-color: #fff;
}

.tb-icon {
    width: 32px;
    height: 18px;
    margin-top: 2px;
}

.tb-select {
    display: flex;
    align-items: center;
    justify-content: space-between;
    height: 24px;
    padding: 0 7px 0 8px;
    font-size: 15px;
}

.tb-zoom {
    width: 72px;
}

.tb-style {
    width: 115px;
}

.tb-font {
    width: 90px;
}

.tb-sep {
    width: 1px;
    height: 20px;
    margin: 0 8px;
    background-color: #c7c7c7;
}

.tb-sep-size {
    margin: 0 -1px 0 8px;
}

.tb-sep-tight {
    margin: 0 3px 0 0;
}

.tb-sep-narrow {
    margin: 0 4px;
}

.tb-size-btn {
    width: 30px;
    text-align: center;
    font-size: 20px;
    line-height: 20px;
}

.tb-size {
    width: 34px;
    height: 24px;
    border: 1px solid #747775;
    border-radius: 4px;
    text-align: center;
    line-height: 22px;
}

.tb-letter {
    width: 32px;
    margin-top: 2px;
    text-align: center;
    font-size: 15px;
    font-family: "Open Sans", sans-serif;
}

.tb-bold {
    font-weight: 700;
}

.tb-italic {
    font-style: italic;
    font-weight: 700;
    font-family: "Liberation Serif", serif;
}

.tb-under {
    text-decoration: underline;
    text-underline-offset: 3px;
}

.tb-color {
    display: flex;
    flex-direction: column;
    align-items: center;
    width: 34px;
    line-height: 16px;
}

.tb-color i {
    width: 22px;
    height: 4px;
    margin-top: 1px;
    background-color: #000;
}

.tb-drop {
    display: flex;
    align-items: center;
    gap: 5px;
    width: 44px;
    margin-top: 2px;
    padding-left: 3px;
}

.tb-align {
    width: 42px;
    padding-left: 8px;
    gap: 3px;
}

.tb-check {
    margin-left: 4px;
}

.tb-num {
    margin-right: -4px;
}

.tb-right {
    display: flex;
    align-items: center;
    margin-left: auto;
}

.editing {
    display: flex;
    align-items: center;
    width: 151px;
    height: 28px;
    padding-left: 16px;
    border-radius: 14px;
    background-color: #edf2fa;
    font-size: 14.8px;
}

.editing span {
    margin-left: 10px;
}

.editing .caret {
    margin-left: auto;
    margin-right: 15px;
}

.tb-sep-edit {
    margin: 0 14px 0 9px;
}

.collapse {
    margin-right: 22px;
}

/* rulers */
.ruler-row {
    height: 24px;
    margin: 0 16px;
    padding-left: 500px;
    border-bottom: 1px solid #c7c7c7;
}

.ruler {
    position: relative;
    width: 792px;
    height: 23px;
    background-image:
        linear-gradient(to right, #8f9296 1px, transparent 1px),
        linear-gradient(to right, #8f9296 1px, transparent 1px);
    background-size: 96px 9px, 12px 4px;
    background-position: 23px bottom, 11px bottom;
    background-repeat: repeat-x;
}

.ruler-nums {
    display: flex;
    padding-left: 119px;
    font-size: 10px;
    line-height: 26px;
    color: #444746;
}

.ruler-nums span {
    width: 96px;
    text-align: center;
}

.indent-left {
    position: absolute;
    left: 65px;
    top: 9px;
    width: 12px;
    height: 10px;
    background-color: #4285f4;
    clip-path: polygon(0 0, 100% 0, 100% 40%, 50% 100%, 0 40%);
}

.indent-right {
    position: absolute;
    left: 715px;
    top: 13px;
    width: 12px;
    height: 7px;
    background-color: #4285f4;
    clip-path: polygon(0 0, 100% 0, 50% 100%);
}

.workspace {
    position: relative;
    flex: 1;
    display: flex;
    min-height: 0;
}

.gutter {
    display: flex;
    width: 516px;
}

.vruler {
    display: flex;
    flex-direction: column;
    width: 16px;
    padding-top: 3px;
    border-right: 1px solid #c7c7c7;
    background-image:
        linear-gradient(#8f9296 1px, transparent 1px),
        linear-gradient(#8f9296 1px, transparent 1px);
    background-size: 8px 96px, 5px 12px;
    background-position: right 8px, right 8px;
    background-repeat: repeat-y;
}

.vruler span {
    flex: none;
    height: 96px;
    line-height: 96px;
    font-size: 10px;
    color: #444746;
    text-align: left;
    transform: rotate(-90deg);
    width: 16px;
}

.outline-btn {
    display: flex;
    align-items: center;
    justify-content: center;
    width: 36px;
    height: 36px;
    margin: 16px 0 0 16px;
    border-radius: 50%;
    background-color: #edf2fa;
}

.page {
    width: 795px;
    padding-left: 71px;
    overflow: hidden;
    background-color: #fff;
    border-left: 1px solid #c7c7c7;
    border-right: 1px solid #c7c7c7;
    font-family: Lato, "Liberation Sans", sans-serif;
    color: #000;
}

.doc-heading {
    height: 14px;
    margin: 0;
    font-size: 17.3px;
    line-height: 14px;
    font-weight: 700;
    color: #2f5496;
}

.req-table {
    width: 540px;
    margin-top: 33px;
    border-collapse: collapse;
    table-layout: fixed;
    font-size: 13.65px;
    line-height: 20.6px;
}

.req-table th,
.req-table td {
    padding: 0 7px 13.4px;
    border: 1px solid #a5a5a5;
    text-align: left;
    vertical-align: top;
}

.req-table th {
    font-weight: 700;
}

.req-table thead th {
    background-color: #a5a5a5;
    color: #000;
}

.col-id {
    width: 85px;
}

.col-desc {
    width: 373px;
}

.col-pri {
    width: 82px;
}

.req-table tbody tr:nth-child(odd) {
    background-color: #f2f2f2;
}

.req-table tbody tr:nth-child(even) {
    background-color: #ededed;
}

.req-table u {
    text-decoration: underline wavy #4285f4 1px;
    text-underline-offset: 2px;
}

.scroll-thumb {
    position: absolute;
    right: 4px;
    top: 213px;
    width: 8px;
    height: 35px;
    border-radius: 4px;
    background-color: #dadce0;
}

.rail {
    display: flex;
    flex-direction: column;
    align-items: center;
    margin-top: -6px;
}

.rail-item {
    flex: none;
    display: flex;
    align-items: center;
    justify-content: center;
    height: 56px;
}

.rail-cal {
    font-family: Roboto, sans-serif;
    font-size: 8px;
    text-anchor: middle;
    fill: #4285f4;
}

.rail-sep {
    width: 20px;
    height: 1px;
    margin-top: 16px;
    background-color: #dadce0;
}

.rail-plus {
    margin-top: 38px;
}

.rail-chevron {
    margin-top: auto;
    margin-bottom: 22px;
}

/* windows taskbar */
.taskbar {
    display: flex;
    align-items: stretch;
    height: 40px;
    background-color: #3b3b2b;
    color: #fff;
    font-family: "Open Sans", sans-serif;
}

.start {
    display: flex;
    align-items: center;
    justify-content: center;
    width: 48px;
}

.task-search {
    display: flex;
    align-items: center;
    width: 344px;
    padding-left: 11px;
    border-top: 1px solid #c8c8c8;
    background-color: #f1f1f1;
    color: #222;
    font-size: 14px;
}

.task-search span {
    margin-left: 11px;
}

.task-app {
    position: relative;
    display: flex;
    align-items: center;
    justify-content: center;
    width: 49px;
}

.task-view {
    width: 51px;
}

.task-open::after,
.task-active::after {
    content: "";
    position: absolute;
    left: 4px;
    right: 4px;
    bottom: 0;
    height: 2px;
    background-color: #76b9ed;
}

.task-active {
    background-color: #5f5f50;
}

.task-active::after {
    left: 0;
    right: 0;
}

.task-letter {
    font-family: "Liberation Sans", sans-serif;
    font-weight: 700;
    font-size: 10px;
    text-anchor: middle;
    fill: #fff;
}

.tray {
    display: flex;
    align-items: center;
    margin-left: auto;
}

.tray-icon {
    margin: 0 4px;
}

.clock {
    display: flex;
    flex-direction: column;
    align-items: center;
    width: 70px;
    font-size: 11.5px;
    line-height: 18px;
}

.notif {
    display: flex;
    justify-content: center;
    width: 40px;
}

.show-desktop {
    width: 13px;
    height: 40px;
    background-image: linear-gradient(to right, transparent 8px, #77776a 8px, #77776a 9px, transparent 9px);
}
```
